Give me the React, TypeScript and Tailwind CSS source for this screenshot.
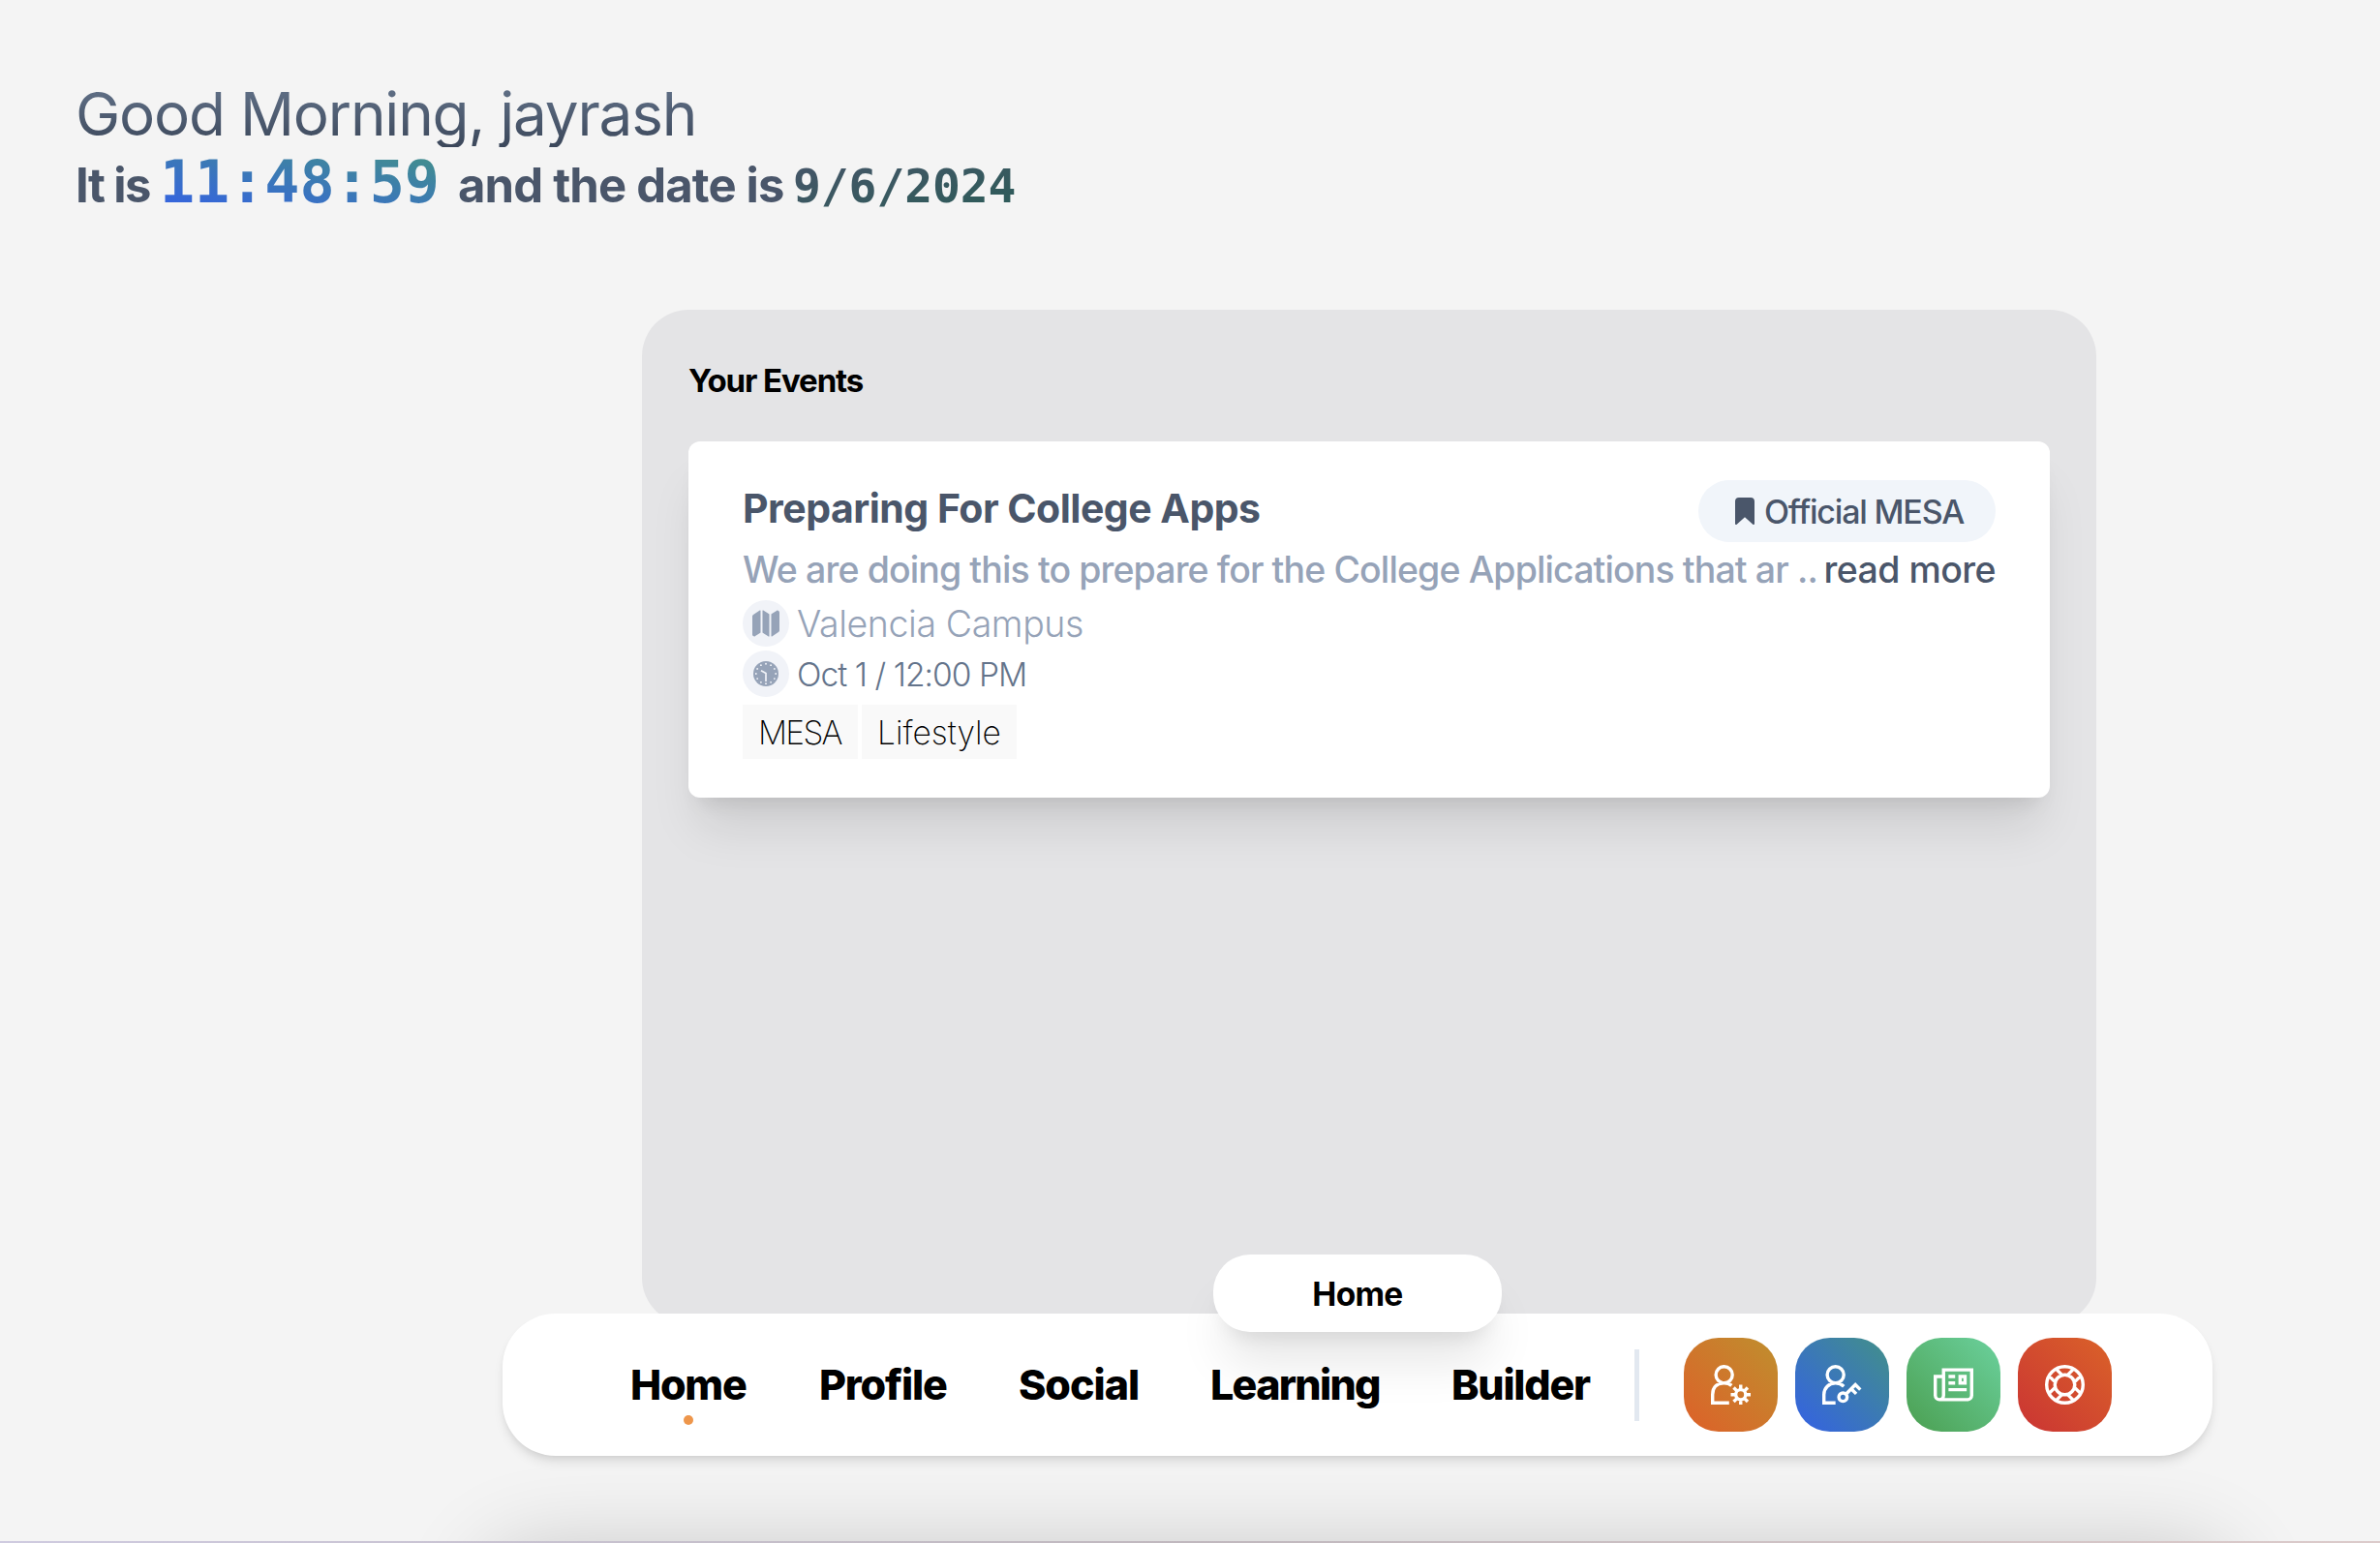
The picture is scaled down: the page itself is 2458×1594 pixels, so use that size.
import type { ReactNode } from "react";
import { GrArticle, GrSupport, GrUserAdmin, GrUserSettings } from "react-icons/gr";
import { IoBookmark, IoMap } from "react-icons/io5";

function ClockIcon() {
  const ticks = Array.from({ length: 12 }, (_, i) => (i * Math.PI) / 6);
  return (
    <svg viewBox="0 0 26 26" className="size-[26px]">
      <circle cx="13" cy="13" r="13" fill="#96a3b8" />
      {ticks.map((a, i) => (
        <circle key={i} cx={13 + 10.2 * Math.sin(a)} cy={13 - 10.2 * Math.cos(a)} r="0.95" fill="#f1f3f8" />
      ))}
      <path d="M8 9.7 13 12.5V21" fill="none" stroke="#f1f3f8" strokeWidth="1.7" />
    </svg>
  );
}

function Greeting() {
  return (
    <header className="flex flex-col items-start pt-[84px] pl-[78px]">
      <h1 className="h-[68px] bg-linear-to-b/srgb from-[#64748b] to-[#3b475a] bg-clip-text pr-2 text-[62px] leading-[67px] font-[440] tracking-[-1.2px] text-transparent">
        Good Morning, jayrash
      </h1>
      <div className="flex items-baseline pt-[6px] text-[49px] leading-[60px] font-bold whitespace-nowrap text-[#4a566a]">
        <span className="w-[87px] tracking-[-1.58px]">It is</span>
        <span className="w-[290px] bg-linear-to-tr/srgb from-[#3461e4] to-[#429089] bg-clip-text font-['DejaVu_Sans_Mono',monospace] text-[60px] text-transparent">
          11:48:59
        </span>
        <span className="ml-[18px] w-[346px] tracking-[-0.83px]">and the date is</span>
        <span className="bg-linear-to-br/srgb from-[#475569] to-[#2c5c58] bg-clip-text font-['DejaVu_Sans_Mono',monospace] text-[48px] tracking-[-0.1px] text-transparent">
          9/6/2024
        </span>
      </div>
    </header>
  );
}

function MetaIcon({ children }: { children: ReactNode }) {
  return (
    <span className="flex size-12 items-center justify-center rounded-full bg-[#f1f3f8] text-[32px] text-[#96a3b8]">
      {children}
    </span>
  );
}

function EventCard() {
  return (
    <article className="h-[368px] rounded-xl bg-white pt-10 pr-14 pl-14 whitespace-nowrap shadow-[0_40px_50px_-10px_rgba(0,0,0,0.1),0_16px_20px_-12px_rgba(0,0,0,0.1)]">
      <div className="flex h-16 items-start justify-between">
        <h3 className="text-[41px] leading-[58px] font-bold tracking-[-0.51px] text-[#4a566a]">
          Preparing For College Apps
        </h3>
        <div className="flex h-16 w-[307px] items-center rounded-full bg-[#f1f5fa] pl-8 text-[34px] font-medium text-[#4a566a]">
          <IoBookmark className="mr-1 size-8 shrink-0" />
          <span className="tracking-[-1.2px]">Official MESA</span>
        </div>
      </div>
      <p className="flex h-14 justify-between text-[37.5px] leading-[58px] font-medium">
        <span className="tracking-[-0.89px] text-[#96a3b8]">
          We are doing this to prepare for the College Applications that ar ..
        </span>
        <span className="tracking-[-0.55px] text-[#4a566a]">read more</span>
      </p>
      <div className="mt-1 flex flex-col gap-1 font-[260]">
        <div className="flex h-12 items-center gap-2 text-[37.5px] tracking-[-0.4px] text-[#96a3b8]">
          <MetaIcon>
            <IoMap />
          </MetaIcon>
          <span className="pt-0.5">Valencia Campus</span>
        </div>
        <div className="flex h-12 items-center gap-2 text-[33.5px] tracking-[-0.95px] text-[#64748b]">
          <MetaIcon>
            <ClockIcon />
          </MetaIcon>
          <span className="pt-0.5">Oct 1 / 12:00 PM</span>
        </div>
      </div>
      <div className="mt-2 flex gap-1 text-[33.5px] leading-[59px] font-[250] text-black">
        <span className="h-14 w-[119px] bg-[#f9f9f9] pl-4 tracking-[-1.7px]">MESA</span>
        <span className="h-14 w-[160px] bg-[#f9f9f9] pl-4">Lifestyle</span>
      </div>
    </article>
  );
}

function EventsPanel() {
  return (
    <section className="absolute top-80 left-[663px] h-[1048px] w-[1502px] rounded-[48px] bg-[#e4e4e6] px-12">
      <h2 className="mt-12 mb-10 h-12 text-[33px] leading-[50px] font-bold tracking-[-1.1px] text-black">
        Your Events
      </h2>
      <EventCard />
    </section>
  );
}

function NavBar() {
  return (
    <nav className="absolute top-[1357px] left-[518.5px] flex h-[147px] w-[1766px] items-center rounded-[55px] bg-white pl-[132.5px] shadow-[0_8px_12px_-2px_rgba(0,0,0,0.1),0_4px_8px_-4px_rgba(0,0,0,0.1)]">
      <div className="flex gap-[74px] text-[43px] font-extrabold whitespace-nowrap text-black">
        <a className="relative w-[121px] tracking-[-1.23px]">
          Home
          <span className="absolute top-[64px] left-[55px] size-2.5 rounded-full bg-[#ee964b]" />
        </a>
        <a className="w-[132px] tracking-[-1.16px]">Profile</a>
        <a className="w-[124px] tracking-[-1.02px]">Social</a>
        <a className="w-[175px] tracking-[-1.7px]">Learning</a>
        <a className="w-[143px] tracking-[-1.25px]">Builder</a>
      </div>
      <span className="mr-[46px] ml-[46px] h-[74px] w-[5px] bg-[#e2e8f0]" />
      <div className="flex gap-[18.5px] text-[41px] text-white">
        <a className="flex size-[96.5px] items-center justify-center rounded-[36px] bg-linear-to-tr/srgb from-[#dd6029] to-[#bf8f2e]">
          <GrUserSettings />
        </a>
        <a className="flex size-[96.5px] items-center justify-center rounded-[36px] bg-linear-to-tr/srgb from-[#3461e4] to-[#429089]">
          <GrUserAdmin />
        </a>
        <a className="flex size-[96.5px] items-center justify-center rounded-[36px] bg-linear-to-tr/srgb from-[#4b9f51] to-[#6bd19d]">
          <GrArticle />
        </a>
        <a className="flex size-[96.5px] items-center justify-center rounded-[36px] bg-linear-to-tr/srgb from-[#ca3433] to-[#da6229]">
          <GrSupport />
        </a>
      </div>
    </nav>
  );
}

export default function App() {
  return (
    <div className="relative h-[1594px] w-full overflow-hidden bg-[#f4f4f4] font-['Inter',sans-serif]">
      <Greeting />
      <EventsPanel />
      <div className="absolute top-[1600px] left-[499px] h-40 w-[1806px] rounded-[56px] shadow-[0_0_90px_rgba(0,0,0,0.19)]" />
      <NavBar />
      <div className="absolute top-[1296px] left-[1253px] flex h-20 w-[298px] items-center justify-center rounded-[38px] bg-white pt-0.5 text-[33.5px] font-bold tracking-[-0.71px] text-black shadow-[0_40px_50px_-10px_rgba(0,0,0,0.1),0_16px_20px_-12px_rgba(0,0,0,0.1)]">
        Home
      </div>
      <div className="absolute bottom-0 left-0 h-0.5 w-full bg-linear-to-r/srgb from-[#cfcbe0] via-[#c0b8be] to-[#dccbcb]" />
    </div>
  );
}
